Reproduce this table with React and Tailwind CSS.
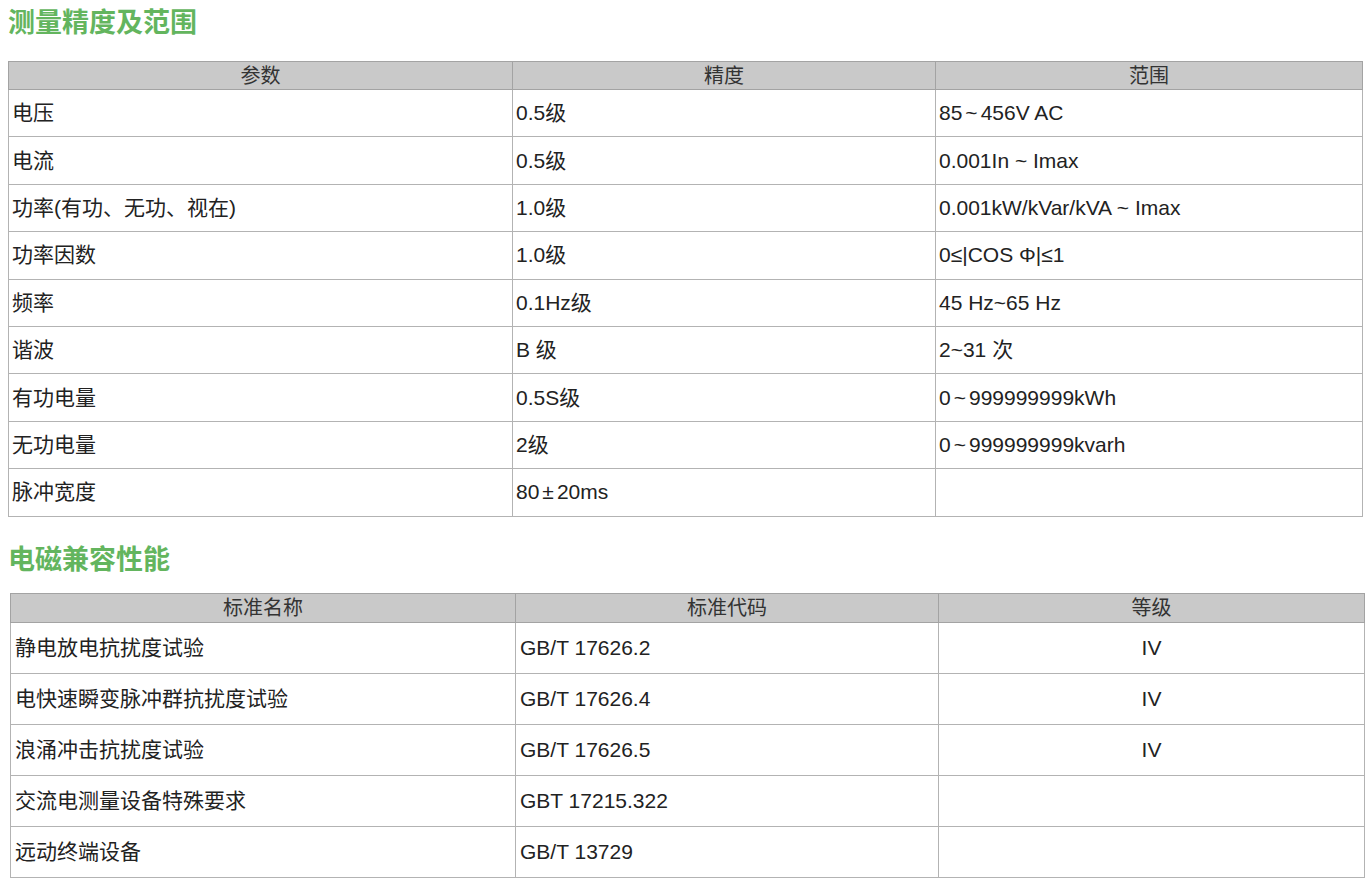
import React from "react";

const Tilde = () => <span className="mx-[3px]">~</span>;

const measure = [
  ["电压", "0.5级", <>85<Tilde />456V AC</>],
  ["电流", "0.5级", "0.001In ~ Imax"],
  ["功率(有功、无功、视在)", "1.0级", "0.001kW/kVar/kVA ~ Imax"],
  ["功率因数", "1.0级", "0≤|COS Φ|≤1"],
  ["频率", "0.1Hz级", "45 Hz~65 Hz"],
  ["谐波", "B 级", "2~31 次"],
  ["有功电量", "0.5S级", <>0<Tilde />999999999kWh</>],
  ["无功电量", "2级", <>0<Tilde />999999999kvarh</>],
  ["脉冲宽度", <>80<span className="mx-[3px]">±</span>20ms</>, ""],
];

const emc = [
  ["静电放电抗扰度试验", "GB/T 17626.2", "IV"],
  ["电快速瞬变脉冲群抗扰度试验", "GB/T 17626.4", "IV"],
  ["浪涌冲击抗扰度试验", "GB/T 17626.5", "IV"],
  ["交流电测量设备特殊要求", "GBT 17215.322", ""],
  ["远动终端设备", "GB/T 13729", ""],
];

const App = () => {
  return (
    <div className="bg-white min-h-screen text-[#222] font-['Liberation_Sans','Noto_Sans_CJK_SC',sans-serif]">
      {/* measurement table */}
      <h2 className="pl-[8px] pt-[3px] h-[61px] text-[27px] leading-[36px] font-bold text-[#63b55e] font-['Noto_Sans_CJK_SC',sans-serif]">
        测量精度及范围
      </h2>
      <table className="ml-[8px] w-[1354px] border-collapse table-fixed text-[21px]">
        <colgroup>
          <col className="w-[504px]" />
          <col className="w-[423px]" />
          <col className="w-[427px]" />
        </colgroup>
        <thead>
          <tr className="h-[28px] bg-[#c9c9c9]">
            <th className="border border-[#a3a3a3] font-normal text-[20px] leading-[26px] text-[#333]">参数</th>
            <th className="border border-[#a3a3a3] font-normal text-[20px] leading-[26px] text-[#333]">精度</th>
            <th className="border border-[#a3a3a3] font-normal text-[20px] leading-[26px] text-[#333]">范围</th>
          </tr>
        </thead>
        <tbody>
          {measure.map((r, i) => (
            <tr key={i} className="h-[47.4px]">
              <td className="border border-[#b3b3b3] px-[3px] leading-[26px]">{r[0]}</td>
              <td className="border border-[#b3b3b3] px-[3px] leading-[26px]">{r[1]}</td>
              <td className="border border-[#b3b3b3] px-[3px] leading-[26px]">{r[2]}</td>
            </tr>
          ))}
        </tbody>
      </table>

      {/* emc table */}
      <h2 className="pl-[8px] pt-[23px] h-[76px] text-[27px] leading-[36px] font-bold text-[#63b55e] font-['Noto_Sans_CJK_SC',sans-serif]">
        电磁兼容性能
      </h2>
      <table className="ml-[10px] w-[1354px] border-collapse table-fixed text-[21px]">
        <colgroup>
          <col className="w-[505px]" />
          <col className="w-[423px]" />
          <col className="w-[426px]" />
        </colgroup>
        <thead>
          <tr className="h-[29px] bg-[#c9c9c9]">
            <th className="border border-[#a3a3a3] font-normal text-[20px] leading-[26px] text-[#333]">标准名称</th>
            <th className="border border-[#a3a3a3] font-normal text-[20px] leading-[26px] text-[#333]">标准代码</th>
            <th className="border border-[#a3a3a3] font-normal text-[20px] leading-[26px] text-[#333]">等级</th>
          </tr>
        </thead>
        <tbody>
          {emc.map((r, i) => (
            <tr key={i} className="h-[51px]">
              <td className="border border-[#b3b3b3] px-[4px] leading-[26px]">{r[0]}</td>
              <td className="border border-[#b3b3b3] px-[4px] leading-[26px]">{r[1]}</td>
              <td className="border border-[#b3b3b3] px-[4px] leading-[26px] text-center">{r[2]}</td>
            </tr>
          ))}
        </tbody>
      </table>
    </div>
  );
};

export default App;
